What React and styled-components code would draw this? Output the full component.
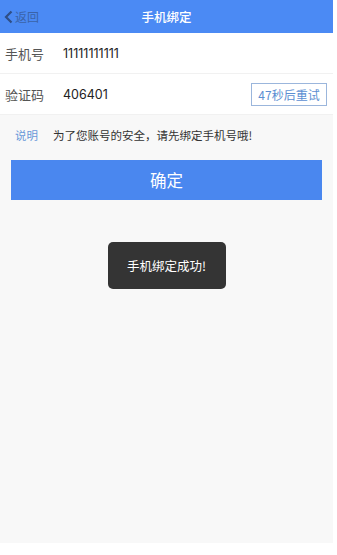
import React from 'react'
import styled, { createGlobalStyle } from 'styled-components'

const GlobalStyle = createGlobalStyle`
  html, body {
    margin: 0;
    padding: 0;
    background: #fff;
  }
  body {
    font-family: "Noto Sans CJK SC", "Noto Sans", sans-serif;
  }
`

function App() {
  return (
    <>
      <GlobalStyle />
      <Page>
        <Header>
          <Back>
            <svg width='9' height='14' viewBox='0 0 9 14'>
              <path d='M7.5 1.5 L2 7 L7.5 12.5' fill='none' stroke='#2f4f86' strokeWidth='2.2' />
            </svg>
            返回
          </Back>
          <Title>手机绑定</Title>
        </Header>
        <Row>
          <Label>手机号</Label>
          <Value>11111111111</Value>
        </Row>
        <Row>
          <Label>验证码</Label>
          <Value>406401</Value>
          <RetryButton>47秒后重试</RetryButton>
        </Row>
        <Note>
          <NoteTag>说明</NoteTag>
          为了您账号的安全，请先绑定手机号哦!
        </Note>
        <Submit>确定</Submit>
        <ToastWrap>
          <Toast>手机绑定成功!</Toast>
        </ToastWrap>
      </Page>
    </>
  )
}

export default App

const Page = styled.div`
  width: 333px;
  height: 543px;
  background: #f8f8f8;
  display: flex;
  flex-direction: column;
`

const Header = styled.div`
  height: 33px;
  background: #4b8af4;
  display: flex;
  align-items: center;
  justify-content: center;
  position: relative;
`

const Back = styled.div`
  position: absolute;
  left: 4px;
  top: 0;
  height: 33px;
  display: flex;
  align-items: center;
  gap: 2px;
  font-size: 12px;
  color: #3a63a8;
`

const Title = styled.div`
  color: #fff;
  font-size: 12.5px;
  font-weight: 500;
`

const Row = styled.div`
  height: 40px;
  background: #fff;
  display: flex;
  align-items: center;
  padding: 0 6px 0 5px;
  border-bottom: 1.5px solid #f1f1f1;
`

const Label = styled.div`
  width: 58px;
  font-size: 13px;
  color: #555;
`

const Value = styled.div`
  flex: 1;
  font-family: Inter, "Noto Sans", sans-serif;
  font-variant-numeric: proportional-nums;
  font-size: 12.5px;
  color: #222;
`

const RetryButton = styled.div`
  width: 74px;
  height: 21px;
  border: 1px solid #9bb6dc;
  display: flex;
  align-items: center;
  justify-content: center;
  font-size: 12px;
  color: #5c8fd2;
`

const Note = styled.div`
  display: flex;
  align-items: center;
  padding: 12px 0 0 15px;
  height: 16px;
  font-size: 11.5px;
  color: #333;
`

const NoteTag = styled.span`
  color: #6a9ad8;
  margin-right: 15px;
`

const Submit = styled.div`
  margin: 17px 11px 0;
  height: 40px;
  background: #4a87ef;
  color: #fff;
  font-size: 16.5px;
  display: flex;
  align-items: center;
  justify-content: center;
`

const ToastWrap = styled.div`
  display: flex;
  justify-content: center;
  margin-top: 42px;
`

const Toast = styled.div`
  width: 118px;
  height: 47px;
  border-radius: 5px;
  background: #343434;
  color: #fff;
  font-size: 12.5px;
  display: flex;
  align-items: center;
  justify-content: center;
`
